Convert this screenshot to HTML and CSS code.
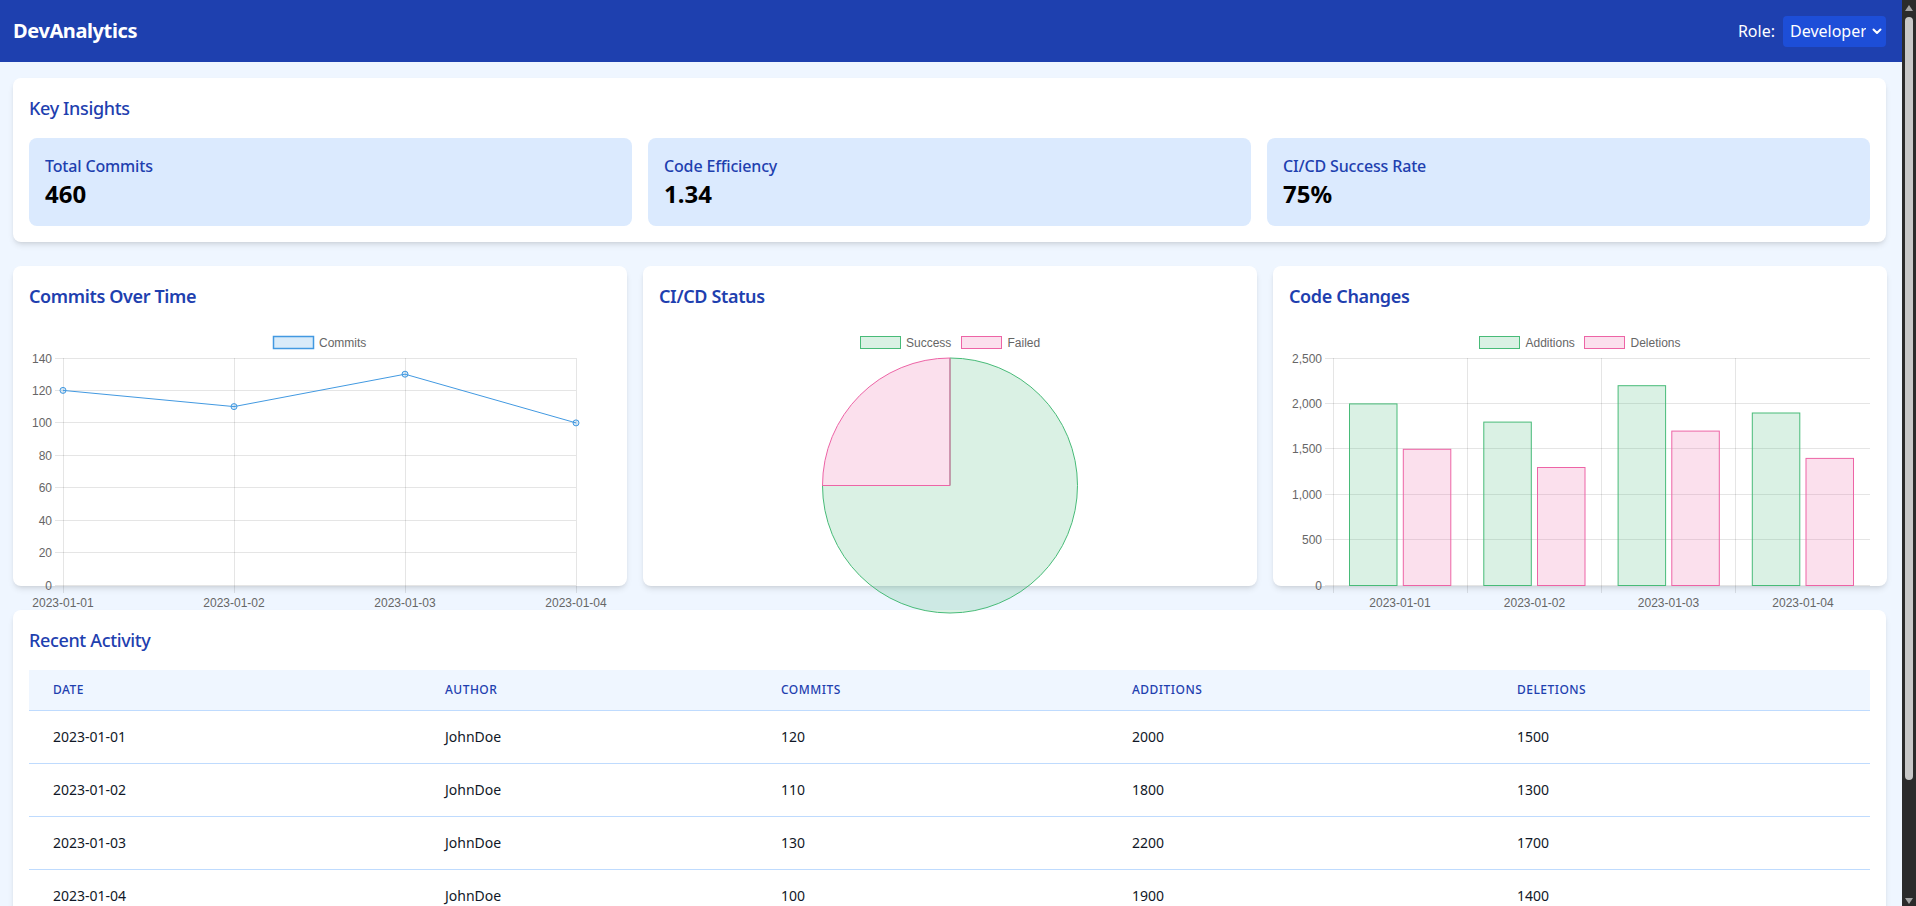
FILE: index.html
```html
<!DOCTYPE html>
<html lang="en">
<head>
<meta charset="utf-8">
<title>DevAnalytics</title>
<link rel="stylesheet" href="styles.css">
</head>
<body>
<header class="topbar">
  <h1 class="brand">DevAnalytics</h1>
  <div class="role">
    <label class="role-label" for="role">Role:</label>
    <span class="select-wrap">
      <select id="role" class="role-select">
        <option>Developer</option>
        <option>Manager</option>
      </select>
      <svg class="chev" width="10" height="7" viewBox="0 0 10 7"><path d="M1.5 1.5 L5 5 L8.5 1.5" fill="none" stroke="#fff" stroke-width="2" stroke-linecap="round" stroke-linejoin="round"/></svg>
    </span>
  </div>
</header>

<main class="page">
  <section class="card">
    <h2 class="section-title">Key Insights</h2>
    <div class="stats">
      <div class="stat">
        <div class="stat-label">Total Commits</div>
        <div class="stat-value">460</div>
      </div>
      <div class="stat">
        <div class="stat-label">Code Efficiency</div>
        <div class="stat-value">1.34</div>
      </div>
      <div class="stat">
        <div class="stat-label">CI/CD Success Rate</div>
        <div class="stat-value">75%</div>
      </div>
    </div>
  </section>

  <div class="charts">
    <section class="card">
      <h2 class="chart-title">Commits Over Time</h2>
      <div class="chart-box">
        <svg class="chart" width="582" height="290" viewBox="0 0 582 290">
          <g class="grid">
            <line x1="26" y1="32.5" x2="547" y2="32.5"/>
            <line x1="26" y1="64.5" x2="547" y2="64.5"/>
            <line x1="26" y1="96.5" x2="547" y2="96.5"/>
            <line x1="26" y1="129.5" x2="547" y2="129.5"/>
            <line x1="26" y1="161.5" x2="547" y2="161.5"/>
            <line x1="26" y1="194.5" x2="547" y2="194.5"/>
            <line x1="26" y1="226.5" x2="547" y2="226.5"/>
            <line x1="26" y1="259.5" x2="547" y2="259.5"/>
            <line x1="34.5" y1="32" x2="34.5" y2="267"/>
            <line x1="205.5" y1="32" x2="205.5" y2="267"/>
            <line x1="376.5" y1="32" x2="376.5" y2="267"/>
            <line x1="547.5" y1="32" x2="547.5" y2="267"/>
          </g>
          <g class="ticks-y">
            <text x="23" y="36.5">140</text>
            <text x="23" y="68.5">120</text>
            <text x="23" y="100.5">100</text>
            <text x="23" y="133.5">80</text>
            <text x="23" y="165.5">60</text>
            <text x="23" y="198.5">40</text>
            <text x="23" y="230.5">20</text>
            <text x="23" y="263.5">0</text>
          </g>
          <g class="ticks-x">
            <text x="34" y="281">2023-01-01</text>
            <text x="205" y="281">2023-01-02</text>
            <text x="376" y="281">2023-01-03</text>
            <text x="547" y="281">2023-01-04</text>
          </g>
          <rect class="blue-box" x="244.5" y="10.5" width="40" height="12"/>
          <text class="legend-text" x="290" y="20.5">Commits</text>
          <polyline class="blue-line" points="34,64.4 205,80.6 376,48.2 547,96.9"/>
          <circle class="blue-dot" cx="34" cy="64.4" r="3"/>
          <circle class="blue-dot" cx="205" cy="80.6" r="3"/>
          <circle class="blue-dot" cx="376" cy="48.2" r="3"/>
          <circle class="blue-dot" cx="547" cy="96.9" r="3"/>
        </svg>
      </div>
    </section>

    <section class="card">
      <h2 class="chart-title">CI/CD Status</h2>
      <div class="chart-box">
        <svg class="chart" width="582" height="290" viewBox="0 0 582 290">
          <rect class="green-box" x="201.5" y="10.5" width="40" height="12"/>
          <text class="legend-text" x="247" y="20.5">Success</text>
          <rect class="pink-box" x="302.5" y="10.5" width="40" height="12"/>
          <text class="legend-text" x="348.5" y="20.5">Failed</text>
          <path class="green-box" d="M291 159.5 L291 32 A127.5 127.5 0 1 1 163.5 159.5 Z"/>
          <path class="pink-box" d="M291 159.5 L163.5 159.5 A127.5 127.5 0 0 1 291 32 Z"/>
        </svg>
      </div>
    </section>

    <section class="card">
      <h2 class="chart-title">Code Changes</h2>
      <div class="chart-box">
        <svg class="chart" width="582" height="290" viewBox="0 0 582 290">
          <g class="grid">
            <line x1="36" y1="32.5" x2="581" y2="32.5"/>
            <line x1="36" y1="77.5" x2="581" y2="77.5"/>
            <line x1="36" y1="122.5" x2="581" y2="122.5"/>
            <line x1="36" y1="168.5" x2="581" y2="168.5"/>
            <line x1="36" y1="213.5" x2="581" y2="213.5"/>
            <line x1="36" y1="259.5" x2="581" y2="259.5"/>
            <line x1="44.5" y1="32" x2="44.5" y2="267"/>
            <line x1="178.5" y1="32" x2="178.5" y2="267"/>
            <line x1="312.5" y1="32" x2="312.5" y2="267"/>
            <line x1="446.5" y1="32" x2="446.5" y2="267"/>
          </g>
          <g class="ticks-y">
            <text x="33" y="36.5">2,500</text>
            <text x="33" y="81.5">2,000</text>
            <text x="33" y="126.5">1,500</text>
            <text x="33" y="172.5">1,000</text>
            <text x="33" y="217.5">500</text>
            <text x="33" y="263.5">0</text>
          </g>
          <g class="ticks-x">
            <text x="111" y="281">2023-01-01</text>
            <text x="245.5" y="281">2023-01-02</text>
            <text x="379.5" y="281">2023-01-03</text>
            <text x="514" y="281">2023-01-04</text>
          </g>
          <rect class="green-box" x="190.5" y="10.5" width="40" height="12"/>
          <text class="legend-text" x="236.5" y="20.5">Additions</text>
          <rect class="pink-box" x="295.5" y="10.5" width="40" height="12"/>
          <text class="legend-text" x="341.5" y="20.5">Deletions</text>

          <rect class="green-box" x="60.5" y="77.9" width="47.5" height="181.6"/>
          <rect class="pink-box" x="114.3" y="123.3" width="47.5" height="136.2"/>
          <rect class="green-box" x="194.8" y="96.1" width="47.5" height="163.4"/>
          <rect class="pink-box" x="248.5" y="141.5" width="47.5" height="118"/>
          <rect class="green-box" x="329.1" y="59.7" width="47.5" height="199.8"/>
          <rect class="pink-box" x="382.8" y="105.1" width="47.5" height="154.4"/>
          <rect class="green-box" x="463.3" y="87" width="47.5" height="172.5"/>
          <rect class="pink-box" x="517" y="132.4" width="47.5" height="127.1"/>
        </svg>
      </div>
    </section>
  </div>

  <section class="card">
    <h2 class="section-title">Recent Activity</h2>
    <table class="activity">
      <thead>
        <tr>
          <th class="col-date">Date</th>
          <th class="col-author">Author</th>
          <th class="col-commits">Commits</th>
          <th class="col-add">Additions</th>
          <th class="col-del">Deletions</th>
        </tr>
      </thead>
      <tbody>
        <tr><td>2023-01-01</td><td>JohnDoe</td><td>120</td><td>2000</td><td>1500</td></tr>
        <tr><td>2023-01-02</td><td>JohnDoe</td><td>110</td><td>1800</td><td>1300</td></tr>
        <tr><td>2023-01-03</td><td>JohnDoe</td><td>130</td><td>2200</td><td>1700</td></tr>
        <tr><td>2023-01-04</td><td>JohnDoe</td><td>100</td><td>1900</td><td>1400</td></tr>
      </tbody>
    </table>
  </section>
</main>

<div class="scrollbar" aria-hidden="true">
  <span class="sb-up"></span>
  <span class="sb-thumb"></span>
  <span class="sb-down"></span>
</div>
</body>
</html>
```

FILE: styles.css
```css
html {
  background: #eff6ff;
}

body {
  margin: 0 14px 0 0;
  background: #eff6ff;
  font-family: "Noto Sans", "Open Sans", sans-serif;
  color: #111827;
}

/* imitation of the window's classic scrollbar */
.scrollbar {
  position: fixed;
  top: 0;
  right: 0;
  width: 14px;
  height: 100vh;
  background: #2b2b2b;
  z-index: 10;
}
.sb-thumb {
  position: absolute;
  left: 3px;
  top: 17px;
  width: 8px;
  height: 763px;
  border-radius: 4px;
  background: #c8c8c8;
}
.sb-up,
.sb-down {
  position: absolute;
  left: 3px;
  width: 0;
  height: 0;
  border-left: 4px solid transparent;
  border-right: 4px solid transparent;
}
.sb-up {
  top: 5px;
  border-bottom: 6px solid #a3a3a3;
}
.sb-down {
  bottom: 2px;
  border-top: 6px solid #a3a3a3;
}

.topbar {
  height: 62px;
  box-sizing: border-box;
  padding: 0 16px 0 13px;
  background: #1e40af;
  display: flex;
  align-items: center;
  justify-content: space-between;
}
.brand {
  margin: 0;
  color: #fff;
  font-size: 20px;
  line-height: 28px;
  font-weight: 700;
  letter-spacing: -0.02em;
}
.role {
  display: flex;
  align-items: center;
  gap: 8px;
}
.role-label {
  color: #fff;
  font-size: 16px;
}
.select-wrap {
  position: relative;
  display: block;
}
.role-select {
  appearance: none;
  -webkit-appearance: none;
  display: block;
  width: 103px;
  height: 31px;
  box-sizing: border-box;
  padding: 0 20px 0 7px;
  border: none;
  border-radius: 4px;
  background: #1d4ed8;
  color: #fff;
  font-family: "Noto Sans", "Open Sans", sans-serif;
  font-size: 16px;
  line-height: 31px;
}
.chev {
  position: absolute;
  right: 4px;
  top: 12px;
  pointer-events: none;
}

.page {
  padding: 16px 16px 100px 13px;
  display: flex;
  flex-direction: column;
  gap: 24px;
}

.card {
  background: #fff;
  border-radius: 8px;
  padding: 16px;
  box-shadow: 0 4px 6px -1px rgba(0, 0, 0, 0.1), 0 2px 4px -2px rgba(0, 0, 0, 0.1);
}

.section-title,
.chart-title {
  margin: 0 0 16px;
  color: #1e40af;
  font-size: 18px;
  line-height: 28px;
  font-weight: 500;
  letter-spacing: -0.02em;
}
.chart-title {
  font-weight: 600;
}

.stats {
  display: grid;
  grid-template-columns: repeat(3, 1fr);
  gap: 16px;
}
.stat {
  background: #dbeafe;
  border-radius: 8px;
  padding: 16px;
}
.stat-label {
  color: #1e40af;
  font-size: 16px;
  line-height: 24px;
  font-weight: 500;
  letter-spacing: -0.01em;
}
.stat-value {
  color: #000;
  font-size: 24px;
  line-height: 32px;
  font-weight: 700;
}

.charts {
  display: grid;
  grid-template-columns: repeat(3, 1fr);
  gap: 16px;
}
.chart-box {
  height: 244px;
}
.chart {
  display: block;
  position: relative;
  overflow: visible;
  font-family: "Liberation Sans", Arial, sans-serif;
  font-size: 12px;
}
.grid line {
  stroke: rgba(0, 0, 0, 0.1);
  stroke-width: 1;
}
.ticks-y text {
  fill: #666;
  text-anchor: end;
}
.ticks-x text {
  fill: #666;
  text-anchor: middle;
}
.legend-text {
  fill: #666;
}
.blue-box {
  fill: rgba(66, 153, 225, 0.2);
  stroke: #4299e1;
  stroke-width: 1.5;
}
.blue-line {
  fill: none;
  stroke: #4299e1;
  stroke-width: 1;
}
.blue-dot {
  fill: rgba(66, 153, 225, 0.2);
  stroke: #4299e1;
  stroke-width: 1;
}
.green-box {
  fill: rgba(72, 187, 120, 0.2);
  stroke: #48bb78;
  stroke-width: 1;
}
.pink-box {
  fill: rgba(237, 100, 166, 0.2);
  stroke: #ed64a6;
  stroke-width: 1;
}

.activity {
  width: 100%;
  border-collapse: collapse;
  table-layout: fixed;
}
.activity th {
  box-sizing: border-box;
  background: #eff6ff;
  color: #1e40af;
  font-size: 12px;
  line-height: 16px;
  font-weight: 500;
  text-transform: uppercase;
  letter-spacing: 0.04em;
  text-align: left;
  padding: 12px 24px;
  border-bottom: 1px solid #bfdbfe;
}
.activity td {
  font-size: 14px;
  line-height: 20px;
  padding: 16px 24px;
  color: #111827;
}
.activity tbody tr + tr td {
  border-top: 1px solid #bfdbfe;
}
.col-date { width: 392px; }
.col-author { width: 336px; }
.col-commits { width: 351px; }
.col-add { width: 385px; }
.col-del { width: auto; }
```
